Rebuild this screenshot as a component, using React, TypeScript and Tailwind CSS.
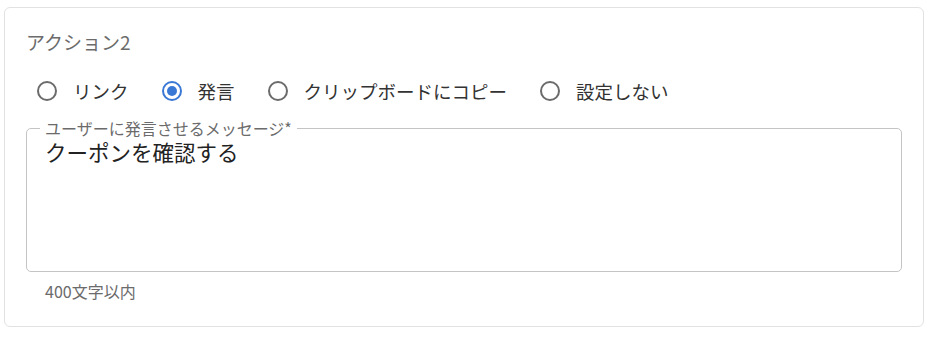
import { useState } from 'react';

const options = ['リンク', '発言', 'クリップボードにコピー', '設定しない'];

function RadioDot({ checked }: { checked: boolean }) {
  return (
    <span
      className={`flex h-[20px] w-[20px] shrink-0 items-center justify-center rounded-full border-2 ${
        checked ? 'border-[#3a78d6]' : 'border-[#6b6b6b]'
      }`}
    >
      {checked && <span className="h-[10px] w-[10px] rounded-full bg-[#3a78d6]" />}
    </span>
  );
}

export default function App() {
  const [selected, setSelected] = useState('発言');
  const [message, setMessage] = useState('クーポンを確認する');

  return (
    <div
      className="h-[338px] w-full bg-white pl-[4px] pr-[10px] pt-[7px]"
      style={{ fontFamily: '"Noto Sans CJK JP", "Noto Sans", sans-serif' }}
    >
      <div className="h-[320px] rounded-[6px] border border-[#e2e2e2] px-[21px] pt-[22px]">
        {/* Title */}
        <div className="text-[19px] leading-[24px] text-[#6b6b6b]">アクション2</div>

        {/* Radio group */}
        <div className="mt-[25px] flex h-[24px] items-center gap-[33px] pl-[11px]">
          {options.map((opt) => (
            <label
              key={opt}
              className="flex cursor-pointer items-center gap-[16px]"
              onClick={() => setSelected(opt)}
            >
              <RadioDot checked={selected === opt} />
              <span className="text-[18.5px] leading-[24px] text-[#333333]">{opt}</span>
            </label>
          ))}
        </div>

        {/* Message field */}
        <div className="relative mt-[25px] h-[144px] rounded-[5px] border border-[#c4c4c4]">
          <span className="absolute left-[13px] top-[-11px] bg-white px-[5px] text-[16px] leading-[20px] text-[#6b6b6b]">
            ユーザーに発言させるメッセージ*
          </span>
          <textarea
            value={message}
            onChange={(e) => setMessage(e.target.value)}
            className="h-full w-full resize-none bg-transparent px-[18px] pt-[9px] text-[21.5px] leading-[28px] text-[#222222] outline-none"
          />
        </div>

        {/* Helper */}
        <div className="ml-[19px] mt-[9px] text-[16px] leading-[20px] text-[#6b6b6b]">400文字以内</div>
      </div>
    </div>
  );
}
